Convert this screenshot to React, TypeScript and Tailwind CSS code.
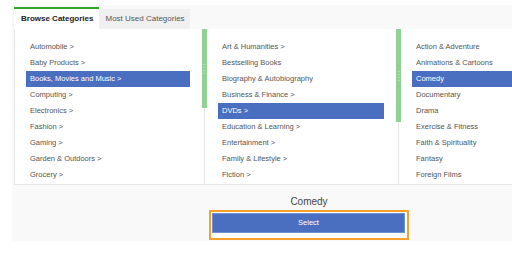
import React from "react"

const columns = [
  {
    width: "w-[190px]",
    selected: 2,
    thumb: "h-[79px]",
    items: [
      "Automobile >",
      "Baby Products >",
      "Books, Movies and Music >",
      "Computing >",
      "Electronics >",
      "Fashion >",
      "Gaming >",
      "Garden & Outdoors >",
      "Grocery >",
    ],
  },
  {
    width: "w-[194px]",
    selected: 4,
    thumb: "h-[93px]",
    items: [
      "Art & Humanities >",
      "Bestselling Books",
      "Biography & Autobiography",
      "Business & Finance >",
      "DVDs >",
      "Education & Learning >",
      "Entertainment >",
      "Family & Lifestyle >",
      "Fiction >",
    ],
  },
  {
    width: "w-[204px]",
    selected: 2,
    thumb: null,
    items: [
      "Action & Adventure",
      "Animations & Cartoons",
      "Comedy",
      "Documentary",
      "Drama",
      "Exercise & Fitness",
      "Faith & Spirituality",
      "Fantasy",
      "Foreign Films",
    ],
  },
]

function Scrollbar({ height }: { height: string }) {
  return (
    <div className={`absolute top-0 right-[-3px] w-[5px] ${height} bg-[#90d194] flex flex-col items-center justify-center gap-[2px] z-10`}>
      <div className="w-[3px] h-px bg-[#a8dbaa]" />
      <div className="w-[3px] h-px bg-[#a8dbaa]" />
      <div className="w-[3px] h-px bg-[#a8dbaa]" />
      <div className="w-[3px] h-px bg-[#a8dbaa]" />
    </div>
  )
}

export default function App() {
  return (
    <div className="w-[512px] h-[265px] overflow-hidden bg-white font-['Liberation_Sans',Arial,sans-serif]">
      <div className="mt-[5px] ml-[12px] w-[592px] bg-[#f9f9f9] pl-[2px] pb-px">
        {/* Tabs */}
        <div className="flex items-end h-[24px]">
          <div className="h-[22px] bg-white border-t-2 border-[#2ea42e] pl-[7px] pr-[6px] flex items-center text-[8px] font-bold text-[#222]">
            Browse Categories
          </div>
          <div className="h-[20px] bg-[#f0f0f0] pl-[6px] pr-[5px] flex items-center text-[8px] text-[#555]">
            Most Used Categories
          </div>
        </div>

        {/* Columns */}
        <div className="flex h-[156px] bg-white border-l border-b border-[#e6e6e6]">
          {columns.map((col, ci) => (
            <div
              key={ci}
              className={`relative ${col.width} ${ci < 2 ? "border-r border-[#e6e6e6]" : ""} pt-[10px]`}
            >
              {col.thumb && <Scrollbar height={col.thumb} />}
              <ul className={`${ci === 0 ? "pl-[11px]" : "pl-[13px]"} pr-[14px]`}>
                {col.items.map((item, i) => (
                  <li
                    key={item}
                    className={`h-[16px] flex items-center pl-[4px] text-[7.5px] ${
                      i === col.selected ? "bg-[#4a6ec0] text-white" : "text-[#555]"
                    }`}
                  >
                    {item}
                  </li>
                ))}
              </ul>
            </div>
          ))}
        </div>

        {/* Footer */}
        <div className="flex flex-col items-center pt-[11px]">
          <p className="text-[10px] leading-[12px] text-[#444]">Comedy</p>
          <div className="mt-[2px] w-[200px] border-2 border-[#f7a02c] bg-white pt-px pl-px pr-[2px] pb-[5px]">
            <button className="block w-full h-[20px] p-0 bg-[#4a6ec0] border border-[#7190d2] text-white text-[7.5px] leading-none">
              Select
            </button>
          </div>
        </div>
      </div>
    </div>
  )
}
